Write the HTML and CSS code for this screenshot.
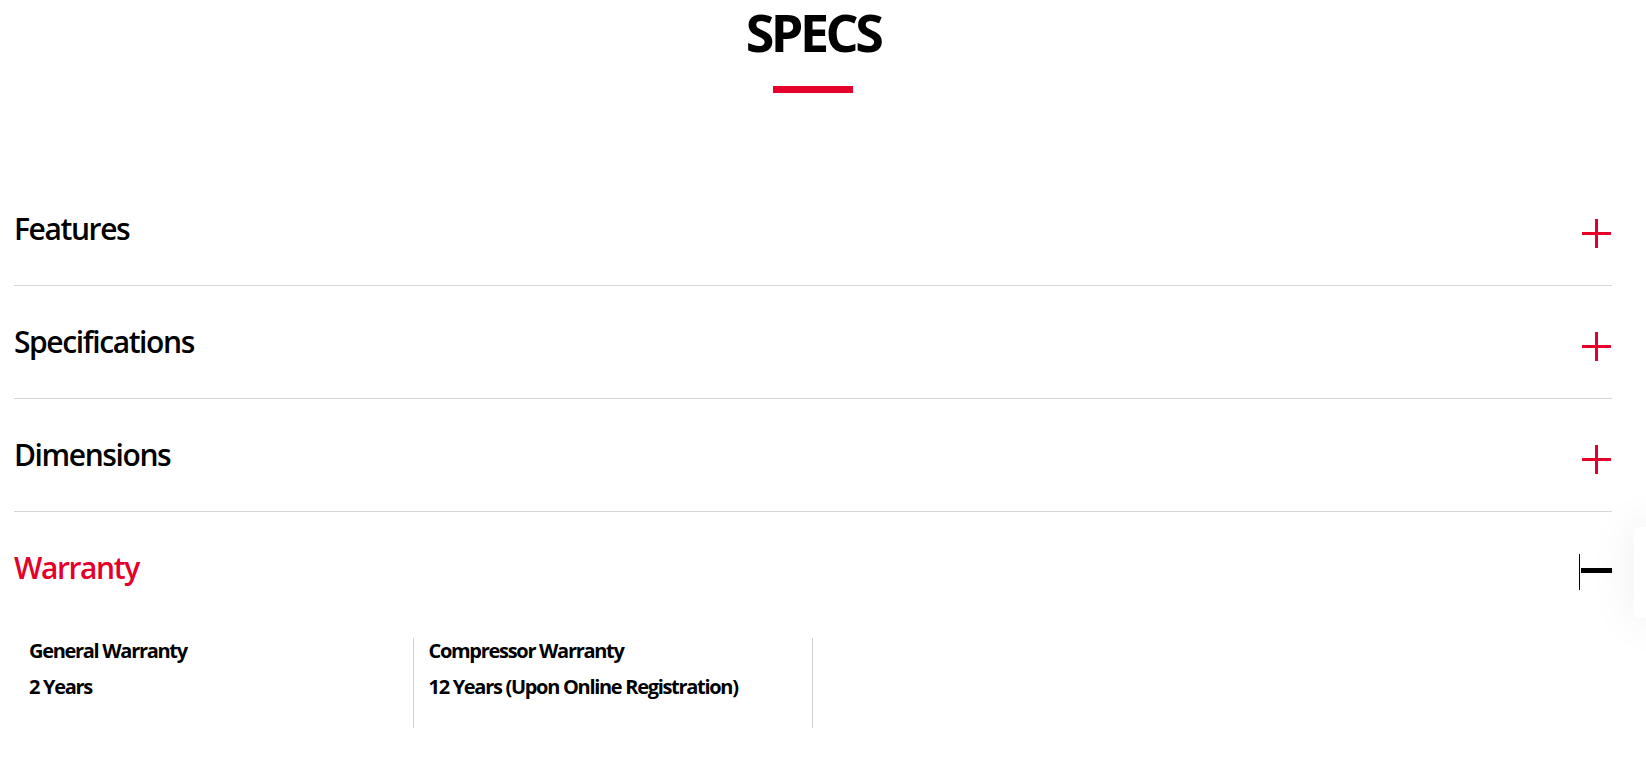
FILE: index.html
```html
<!DOCTYPE html>
<html lang="en">
<head>
<meta charset="utf-8">
<title>Specs</title>
<link rel="stylesheet" href="styles.css">
</head>
<body>
<main class="specs">
  <h2 class="specs-title">SPECS</h2>
  <div class="specs-rule"></div>

  <div class="accordion">
    <div class="acc-item">
      <div class="acc-head">
        <span class="acc-label">Features</span>
        <span class="icon-plus"></span>
      </div>
    </div>
    <div class="acc-item">
      <div class="acc-head">
        <span class="acc-label">Specifications</span>
        <span class="icon-plus"></span>
      </div>
    </div>
    <div class="acc-item">
      <div class="acc-head">
        <span class="acc-label">Dimensions</span>
        <span class="icon-plus"></span>
      </div>
    </div>
    <div class="acc-item acc-open">
      <div class="acc-head">
        <span class="acc-label">Warranty</span>
        <span class="icon-minus"><span class="minus-bar"></span></span>
      </div>
      <div class="acc-body">
        <div class="spec-col">
          <div class="spec-name">General Warranty</div>
          <div class="spec-value">2 Years</div>
        </div>
        <div class="spec-col">
          <div class="spec-name">Compressor Warranty</div>
          <div class="spec-value">12 Years (Upon Online Registration)</div>
        </div>
      </div>
    </div>
  </div>
</main>
<div class="side-widget"></div>
</body>
</html>
```

FILE: styles.css
```css
html, body {
  margin: 0;
  padding: 0;
  background: #fff;
  overflow: hidden;
}

body {
  font-family: "Open Sans", "Noto Sans", sans-serif;
  color: #000;
}

.specs {
  padding: 0 34px 0 14px;
}

.specs-title {
  margin: 0;
  padding-top: 2px;
  text-align: center;
  font-size: 52px;
  line-height: 60px;
  font-weight: 700;
  letter-spacing: -3.5px;
}

.specs-rule {
  width: 80px;
  height: 7px;
  margin: 24px auto 0;
  background: #e4002b;
}

.accordion {
  margin-top: 80px;
}

.acc-item {
  border-bottom: 1px solid #d6d6d6;
}

.acc-item.acc-open {
  border-bottom: none;
}

.acc-head {
  display: flex;
  align-items: center;
  justify-content: space-between;
  padding: 41px 0 41px;
  height: 30px;
}

.acc-label {
  font-size: 30px;
  line-height: 30px;
  font-weight: 600;
  letter-spacing: -1.4px;
}

.acc-open .acc-label {
  color: #e4002b;
}

.icon-plus {
  position: relative;
  width: 29px;
  height: 29px;
  margin-top: 9px;
  margin-right: 1px;
}

.icon-plus::before,
.icon-plus::after {
  content: "";
  position: absolute;
  background: #e4002b;
}

.icon-plus::before {
  left: 0;
  right: 0;
  top: 13px;
  height: 3px;
}

.icon-plus::after {
  top: 0;
  bottom: 0;
  left: 13px;
  width: 3px;
}

.icon-minus {
  display: flex;
  align-items: center;
  width: 33px;
  height: 36px;
  margin-top: 8px;
  border-left: 1px solid #000;
  box-sizing: border-box;
  padding-left: 1px;
}

.minus-bar {
  display: block;
  width: 31px;
  height: 5px;
  margin-top: -3px;
  background: #000;
}

.acc-body {
  display: grid;
  grid-template-columns: repeat(4, 1fr);
  margin-top: 14px;
}

.spec-col {
  border-right: 1px solid #d0d0d0;
  padding: 1px 15px 29px;
}

.spec-name,
.spec-value {
  font-size: 20px;
  line-height: 24px;
  font-weight: 700;
  letter-spacing: -1.3px;
}

.spec-name {
  margin-bottom: 12px;
}

.side-widget {
  position: fixed;
  left: 1634px;
  top: 527px;
  width: 60px;
  height: 91px;
  background: #fff;
  border-radius: 6px;
  box-shadow: 0 0 50px rgba(0, 0, 0, 0.07);
}
```
